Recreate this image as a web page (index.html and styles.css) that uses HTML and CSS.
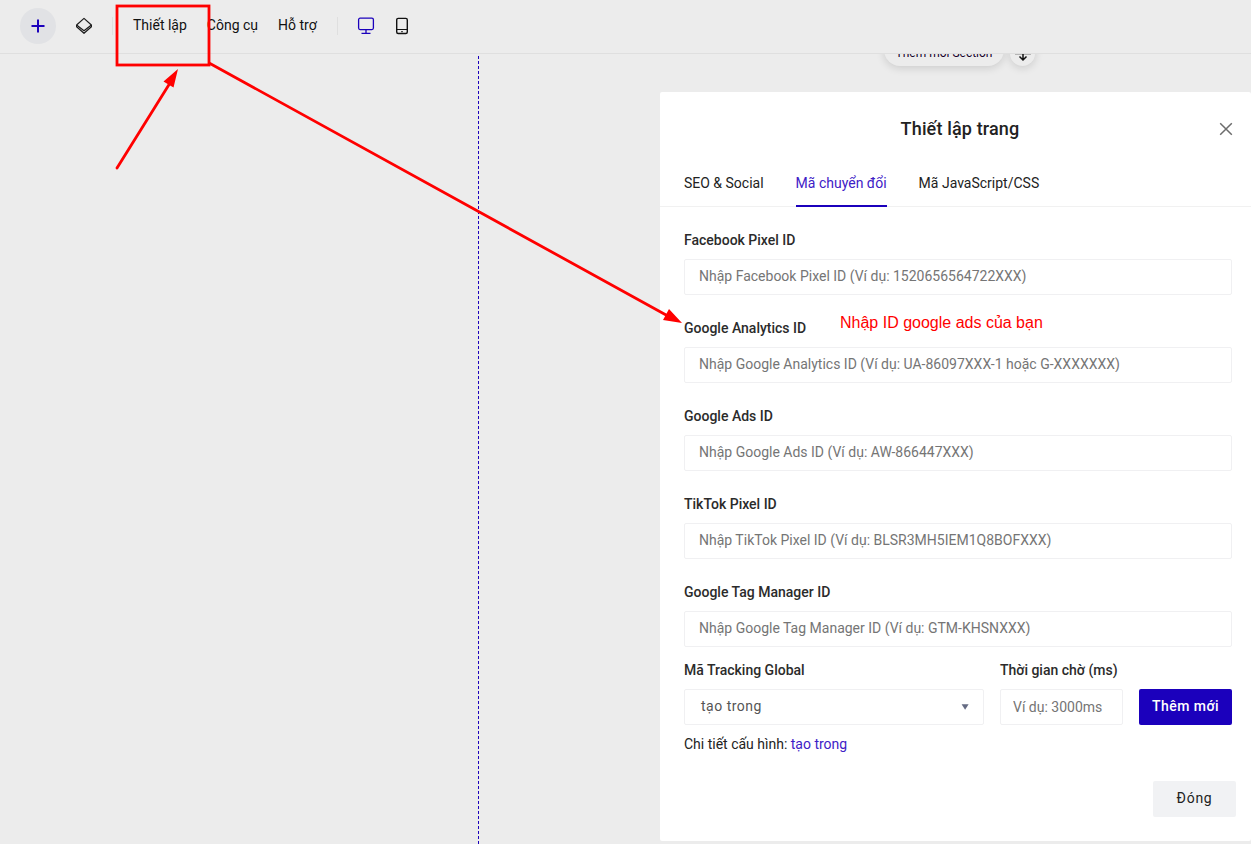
FILE: index.html
```html
<!DOCTYPE html>
<html lang="vi">
<head>
<meta charset="utf-8">
<title>Thiết lập trang</title>
<link rel="stylesheet" href="styles.css">
</head>
<body>
<header class="topbar">
  <button class="add" aria-label="Add"><svg width="14" height="14" viewBox="0 0 14 14"><path d="M7 .5v13M.5 7h13" stroke="#1b00bc" stroke-width="2" fill="none"/></svg></button>
  <svg class="layers" width="18" height="18" viewBox="0 0 18 18" fill="none" stroke="#1c1c1c" stroke-width="1.2" stroke-linejoin="round"><path d="M9 1.4 16.4 8 9 13.8 1.6 8z"/><path d="M1.6 8v1.8L9 16.3l7.4-6.5V8"/></svg>
  <span class="divider"></span>
  <nav class="menu"><a>Thiết lập</a><a>Công cụ</a><a>Hỗ trợ</a></nav>
  <span class="divider second"></span>
  <svg class="desktop" width="18" height="18" viewBox="0 0 18 18" fill="none" stroke="#1b00bc" stroke-width="1.3"><rect x="1.6" y="1.2" width="14.8" height="11.4" rx="1.5"/><path d="M9 12.6v3.6M4.5 16.4h9"/></svg>
  <svg class="mobile" width="14" height="18" viewBox="0 0 14 18" fill="none" stroke="#111" stroke-width="1.4"><rect x="1.7" y="1.4" width="10.6" height="15.1" rx="1.5"/><path d="M2 12.5h10" stroke-width="1"/><path d="M6.3 14.6h1.4" stroke-width="1.4"/></svg>
</header>
<main class="canvas">
  <div class="guide"></div>
  <div class="section-tools">
    <span class="pill">Thêm mới Section</span>
    <span class="round"><svg width="16" height="16" viewBox="0 0 16 16" fill="none" stroke="#111" stroke-width="1.5"><path d="M0 7.6h16M8 1v13M4.5 10.5 8 14l3.5-3.5"/></svg></span>
  </div>
  <section class="panel">
    <div class="panel-head">
      <h1>Thiết lập trang</h1>
      <svg class="close" width="14" height="14" viewBox="0 0 14 14"><path d="M1.2 1.2 12.8 12.8M12.8 1.2 1.2 12.8" stroke="#6c6c6c" stroke-width="1.5"/></svg>
    </div>
    <div class="tabs"><a>SEO &amp; Social</a><a class="active">Mã chuyển đổi</a><a>Mã JavaScript/CSS</a></div>
    <div class="form">
      <label class="field"><span>Facebook Pixel ID</span><input placeholder="Nhập Facebook Pixel ID (Ví dụ: 1520656564722XXX)"></label>
      <label class="field"><span>Google Analytics ID</span><input placeholder="Nhập Google Analytics ID (Ví dụ: UA-86097XXX-1 hoặc G-XXXXXXX)"></label>
      <label class="field"><span>Google Ads ID</span><input placeholder="Nhập Google Ads ID (Ví dụ: AW-866447XXX)"></label>
      <label class="field"><span>TikTok Pixel ID</span><input placeholder="Nhập TikTok Pixel ID (Ví dụ: BLSR3MH5IEM1Q8BOFXXX)"></label>
      <label class="field"><span>Google Tag Manager ID</span><input placeholder="Nhập Google Tag Manager ID (Ví dụ: GTM-KHSNXXX)"></label>
      <div class="tracking">
        <div class="field global"><span>Mã Tracking Global</span><div class="select"><b>tạo trong</b><svg width="8" height="6" viewBox="0 0 8 6"><path d="M.6.3h7L4.1 5.8z" fill="#656b83"/></svg></div></div>
        <label class="field wait"><span>Thời gian chờ (ms)</span><input placeholder="Ví dụ: 3000ms"></label>
        <button class="primary">Thêm mới</button>
      </div>
      <p class="detail">Chi tiết cấu hình: <a>tạo trong</a></p>
    </div>
    <div class="panel-foot"><button class="dismiss">Đóng</button></div>
  </section>
</main>
<svg class="marks" width="1251" height="844" viewBox="0 0 1251 844" fill="none" stroke="#f00" stroke-width="2.8">
  <rect x="117" y="6" width="92" height="59"/>
  <path d="M117 168 170 83M210 63.5 667 315.5" stroke-linecap="round"/>
  <path d="M178 69 163.5 81.5 173.5 87.5zM682 323 669 309 663 320z" fill="#f00" stroke="none"/>
</svg>
<span class="note">Nhập ID google ads của bạn</span>
</body>
</html>
```
FILE: styles.css
```css
* { box-sizing: border-box; }
body { margin: 0; height: 844px; overflow: hidden; background: #ececec; font: 14px/20px Roboto, sans-serif; color: #222; position: relative; }
button { border: 0; padding: 0; font: inherit; }
.topbar { height: 54px; border-bottom: 1px solid #dfdfdf; display: flex; align-items: center; padding: 0 0 2px 20px; }
.add { width: 36px; height: 36px; border-radius: 50%; background: #e1e2e5; display: flex; align-items: center; justify-content: center; }
.layers { margin-left: 19px; }
.divider { width: 1px; height: 18px; background: #dfdfdf; margin-left: 19px; }
.menu { display: flex; gap: 20px; margin-left: 20px; color: #111; padding-bottom: 2px; }
.second { margin-left: 20px; }
.desktop { margin-left: 19px; }
.mobile { margin-left: 20px; }
.canvas { height: 790px; display: flex; align-items: flex-start; overflow: hidden; position: relative; }
.guide { margin-left: 478px; width: 1px; height: 790px; background: repeating-linear-gradient(to bottom, transparent 0 2px, #1b00bc 2px 5px); }
.section-tools { position: absolute; top: -20px; left: 884px; display: flex; gap: 6px; align-items: flex-end; }
.pill { width: 120px; height: 32px; border-radius: 16px; background: #ececec; box-shadow: 0 2px 8px rgba(0,0,0,.14); text-align: center; font-size: 12px; line-height: 39px; color: #15002a; white-space: nowrap; }
.round { width: 25px; height: 32px; border-radius: 0 0 13px 13px; background: #ececec; box-shadow: 0 2px 8px rgba(0,0,0,.14); display: flex; align-items: flex-end; justify-content: center; padding-bottom: 4px; }
.panel { margin: 38px 0 0 181px; width: 591px; height: 749px; background: #fff; border-radius: 2px; display: flex; flex-direction: column; position: relative; }
.panel-head { height: 68px; display: grid; grid-template-columns: 1fr auto 1fr; align-items: center; padding: 6px 18px 0 27px; }
.panel-head h1 { margin: 0; font-size: 18px; font-weight: 500; line-height: 24px; letter-spacing: .15px; grid-column: 2; }
.close { justify-self: end; }
.tabs { height: 47px; border-bottom: 1px solid #f1f1f1; display: flex; gap: 32px; padding: 0 24px; }
.tabs a { height: 47px; line-height: 46px; white-space: nowrap; }
.tabs .active { color: #3e20c6; border-bottom: 2px solid #1b00bc; }
.form { padding: 23px 19px 0 24px; flex: 1; }
.field { display: flex; flex-direction: column; gap: 9px; margin-bottom: 23px; }
.field > span { font-weight: 500; height: 20px; white-space: nowrap; color: #2b2b2b; }
.field input { width: 100%; height: 36px; border: 1px solid #f0f0f2; border-radius: 2px; background: #fff; padding: 0 14px 3px; font: 14px Roboto, sans-serif; outline: 0; }
.field input::placeholder { color: #757575; opacity: 1; }
.tracking { display: flex; align-items: flex-end; gap: 16px; margin-top: -10px; }
.tracking .field { margin: 0; }
.global { width: 300px; }
.wait { width: 123px; }
.wait input { padding: 0 12px; }
.select { height: 36px; border: 1px solid #f0f0f2; border-radius: 2px; display: flex; align-items: center; justify-content: space-between; padding: 0 14px 2px 16px; color: #555; letter-spacing: .5px; }
.select b { font-weight: 400; }
.select svg { margin-top: 2px; }
.primary { width: 93px; height: 36px; background: #1b00bc; border-radius: 2px; color: #fff; font-weight: 500; letter-spacing: .45px; padding-bottom: 2px; }
.detail { margin: 9px 0 0; }
.detail a { color: #3e20c6; }
.panel-foot { display: flex; justify-content: flex-end; padding: 0 15px 24px; }
.dismiss { width: 83px; height: 36px; background: #f1f2f4; border-radius: 2px; color: #222; letter-spacing: .7px; padding-bottom: 2px; }
.marks { position: absolute; left: 0; top: 0; pointer-events: none; }
.note { position: absolute; left: 840px; top: 313px; font: 16px/20px "Liberation Sans", Arial, sans-serif; color: #f00; white-space: nowrap; }
```
